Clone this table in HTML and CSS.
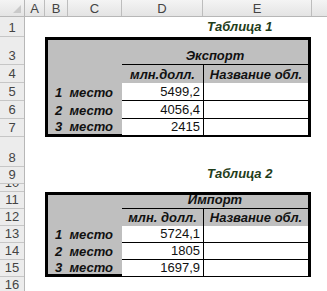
FILE: index.html
```html
<!DOCTYPE html>
<html lang="ru">
<head>
<meta charset="utf-8">
<title>Таблицы</title>
<link rel="stylesheet" href="styles.css">
</head>
<body>
<div class="sheet">
  <div class="corner">
    <svg class="corner-mark" width="8" height="8" viewBox="0 0 8 8"><polygon points="8,0 8,8 0,8" fill="#c9c9c9"/></svg>
  </div>
  <div class="colheads">
    <div class="ch w-a">A</div>
    <div class="ch w-b">B</div>
    <div class="ch w-c">C</div>
    <div class="ch w-d">D</div>
    <div class="ch w-e">E</div>
    <div class="ch w-f"></div>
  </div>
  <div class="rowheads">
    <div class="rh h20">1</div>
    <div class="rh h28">3</div>
    <div class="rh h18">4</div>
    <div class="rh h18">5</div>
    <div class="rh h18">6</div>
    <div class="rh h18">7</div>
    <div class="rh h30">8</div>
    <div class="rh h17">9</div>
    <div class="rh h8">10</div>
    <div class="rh h17">11</div>
    <div class="rh h17">12</div>
    <div class="rh h17">13</div>
    <div class="rh h17">14</div>
    <div class="rh h17">15</div>
    <div class="rh h17">16</div>
  </div>
  <div class="body">
    <div class="title title-1">Таблица 1</div>
    <div class="xtable xtable-1">
      <div class="cell lab"></div>
      <div class="cell head span2 under">Экспорт</div>
      <div class="cell lab"></div>
      <div class="cell head">млн.долл.</div>
      <div class="cell head vl">Название обл.</div>
      <div class="cell lab">1&nbsp; место</div>
      <div class="cell num hl">5499,2</div>
      <div class="cell val vl hl"></div>
      <div class="cell lab">2&nbsp; место</div>
      <div class="cell num hl">4056,4</div>
      <div class="cell val vl hl"></div>
      <div class="cell lab">3&nbsp; место</div>
      <div class="cell num">2415</div>
      <div class="cell val vl"></div>
    </div>
    <div class="title title-2">Таблица 2</div>
    <div class="xtable xtable-2">
      <div class="cell lab"></div>
      <div class="cell head span2 under">Импорт</div>
      <div class="cell lab"></div>
      <div class="cell head">млн. долл.</div>
      <div class="cell head vl">Название обл.</div>
      <div class="cell lab">1&nbsp; место</div>
      <div class="cell num hl">5724,1</div>
      <div class="cell val vl hl"></div>
      <div class="cell lab">2&nbsp; место</div>
      <div class="cell num hl">1805</div>
      <div class="cell val vl hl"></div>
      <div class="cell lab">3&nbsp; место</div>
      <div class="cell num">1697,9</div>
      <div class="cell val vl"></div>
    </div>
  </div>
</div>
</body>
</html>
```
FILE: styles.css
```css
html, body {
  margin: 0;
  padding: 0;
  background: #ffffff;
}
body {
  width: 327px;
  height: 291px;
  overflow: hidden;
  font-family: "Liberation Sans", Arial, sans-serif;
}
.sheet {
  display: grid;
  grid-template-columns: 25px 1fr;
  grid-template-rows: 17px 1fr;
  width: 327px;
  height: 291px;
}
.corner {
  background: linear-gradient(#f4f4f4, #e4e4e4);
  border-right: 1px solid #b7b7b7;
  border-bottom: 1px solid #b7b7b7;
  box-sizing: border-box;
  display: flex;
  justify-content: flex-end;
  align-items: flex-end;
  padding: 0 3px 3px 0;
}
.corner-mark { display: block; }
.colheads {
  display: flex;
  background: linear-gradient(#f4f4f4, #e4e4e4);
  border-bottom: 1px solid #b7b7b7;
  box-sizing: border-box;
}
.ch {
  box-sizing: border-box;
  border-right: 1px solid #bdbdbd;
  font-size: 13px;
  color: #444;
  display: flex;
  justify-content: center;
  align-items: center;
  flex: none;
}
.w-a { width: 20px; }
.w-b { width: 23px; }
.w-c { width: 54px; }
.w-d { width: 81px; }
.w-e { width: 109px; }
.w-f { flex: 1; border-right: none; }
.rowheads {
  display: flex;
  flex-direction: column;
  background: #ececec;
  border-right: 1px solid #b7b7b7;
  box-sizing: border-box;
}
.rh {
  box-sizing: border-box;
  border-bottom: 1px solid #c6c6c6;
  font-size: 13px;
  line-height: 15px;
  color: #444;
  display: flex;
  justify-content: center;
  align-items: flex-end;
  padding-bottom: 1px;
  overflow: hidden;
  flex: none;
}
.h8 { height: 8px; }
.h17 { height: 17px; }
.h18 { height: 18px; }
.h20 { height: 20px; }
.h28 { height: 28px; }
.h30 { height: 30px; }

.body {
  display: grid;
  grid-template-columns: 20px 23px 54px 81px 109px 1fr;
  grid-template-rows: 20px 28px 18px 18px 18px 18px 30px 17px 8px 17px 17px 17px 17px 17px 17px;
}
.title {
  font-size: 13px;
  font-weight: bold;
  font-style: italic;
  color: #1f3d1a;
  grid-column: 5;
  align-self: end;
  padding: 0 0 3px 4px;
  line-height: 15px;
  white-space: nowrap;
}
.title-1 { grid-row: 1; }
.title-2 { grid-row: 8; }

.xtable {
  grid-column: 2 / 6;
  margin-right: 1px;
  border: 3px solid #000;
  background: #bfbfbf;
  display: grid;
  grid-template-columns: 74px 81px 1fr;
}
.xtable-1 {
  grid-row: 2 / 7;
  grid-template-rows: 25px 18px 18px 18px 1fr;
}
.xtable-2 {
  grid-row: 10 / 15;
  grid-template-rows: 14px 17px 17px 17px 1fr;
}
.cell {
  box-sizing: border-box;
  display: flex;
  align-items: flex-end;
  font-size: 13px;
  line-height: 15px;
  padding: 0 3px 1px;
  color: #111;
  white-space: nowrap;
  min-width: 0;
}
.lab {
  font-weight: bold;
  font-style: italic;
  justify-content: flex-end;
  padding-right: 9px;
}
.head {
  font-weight: bold;
  font-style: italic;
  justify-content: center;
}
.span2 { grid-column: 2 / 4; }
.under { border-bottom: 1px solid #000; }
.vl { border-left: 1px solid #000; }
.hl { border-bottom: 1px solid #000; }
.num {
  background: #fff;
  justify-content: flex-end;
}
.val { background: #fff; }
```
